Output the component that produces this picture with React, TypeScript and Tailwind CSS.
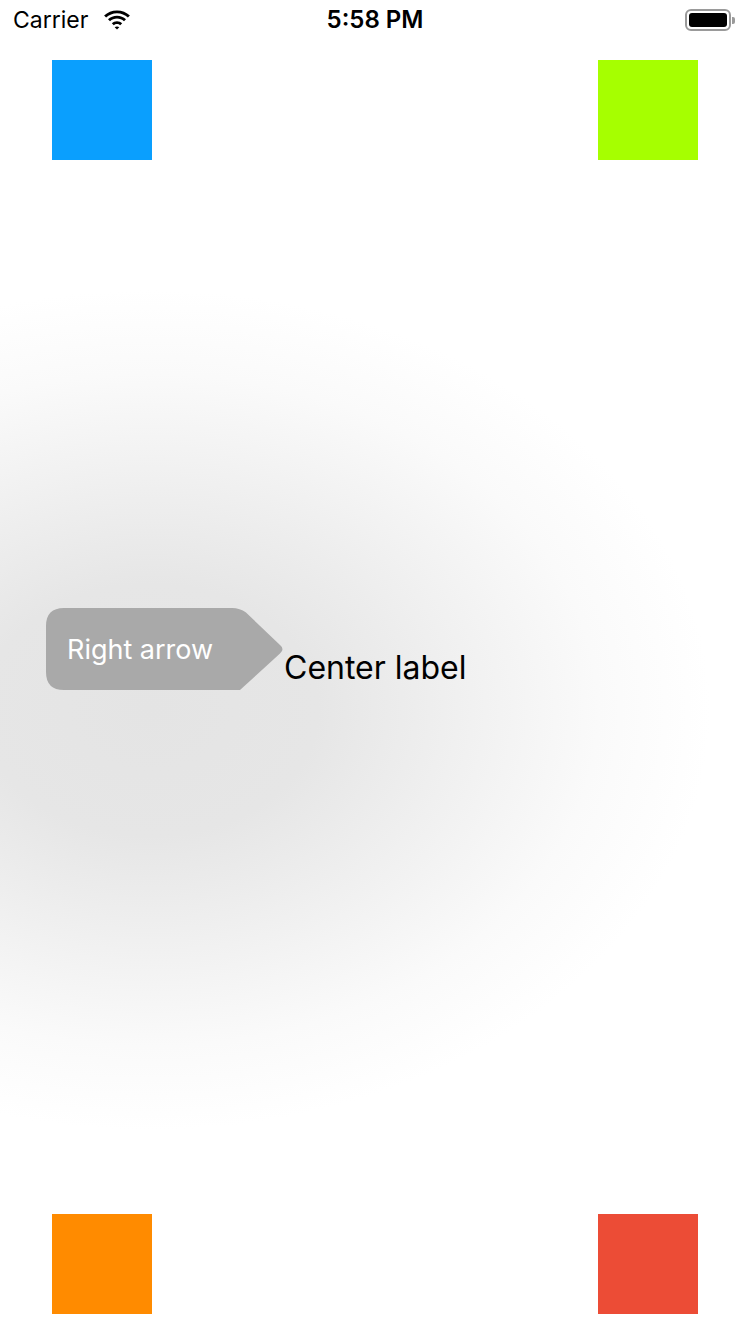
export default function App() {
    return (
        <div
            className="relative flex flex-col min-h-[1334px] w-[750px] bg-white overflow-hidden"
            style={{ fontFamily: "Inter, 'Noto Sans', sans-serif" }}
        >
            {/* soft shadow behind the tooltip */}
            <div className="absolute inset-0 bg-[radial-gradient(ellipse_560px_420px_at_150px_710px,#e4e4e4_0%,#e6e6e6_30%,#f2f2f2_60%,#fafafa_80%,#ffffff_100%)]"></div>

            <div className="relative flex flex-row items-center h-[40px] px-[13px] text-black">
                <div className="flex flex-row items-center gap-[15px] w-[200px]">
                    <span className="text-[23px] leading-none">Carrier</span>
                    <svg width="28" height="20" viewBox="0 0 28 20">
                        <path d="M14 3.2c4.2 0 8 1.6 10.9 4.3l2-2C23.5 2.3 19 .4 14 .4S4.5 2.3 1.1 5.5l2 2C6 4.8 9.8 3.2 14 3.2z" fill="black" />
                        <path d="M14 8.6c2.7 0 5.1 1 7 2.7l2-2C20.6 7.1 17.4 5.8 14 5.8s-6.6 1.3-9 3.5l2 2c1.9-1.7 4.3-2.7 7-2.7z" fill="black" />
                        <path d="M14 14c1.3 0 2.4.5 3.2 1.2l2-2C17.8 11.9 16 11.2 14 11.2s-3.8.7-5.2 2l2 2c.8-.7 1.9-1.2 3.2-1.2z" fill="black" />
                        <path d="M14 19.6l2.3-2.4c-.6-.5-1.4-.8-2.3-.8s-1.7.3-2.3.8z" fill="black" />
                    </svg>
                </div>
                <div className="flex-1 text-center text-[24px] font-semibold leading-none">5:58 PM</div>
                <div className="flex flex-row items-center justify-end w-[200px] pr-[2px]">
                    <div className="flex items-center justify-center w-[46px] h-[22px] rounded-[6px] border-2 border-[#9a9a9a] p-[2px]">
                        <div className="w-full h-full bg-black rounded-[3px]"></div>
                    </div>
                    <div className="w-[3px] h-[7px] bg-[#9a9a9a] rounded-r-[2px] ml-[1px]"></div>
                </div>
            </div>

            <div className="relative flex flex-row justify-between px-[52px] pt-[20px]">
                <div className="w-[100px] h-[100px] bg-[#0a9ffe]"></div>
                <div className="w-[100px] h-[100px] bg-[#a6ff00]"></div>
            </div>

            <div className="relative flex-1 flex flex-row items-start pl-[46px] pt-[448px]">
                <div className="relative w-[239px] h-[82px] flex items-center">
                    <svg className="absolute inset-0" width="239" height="82" viewBox="0 0 239 82">
                        <path
                            d="M18 0 H186 Q194 0 200 4.5 L234 37 Q239 41 234 45.5 L194 82 H18 Q0 82 0 64 V18 Q0 0 18 0 Z"
                            fill="#a9a9a9"
                        />
                    </svg>
                    <span className="relative pl-[21px] text-[27px] text-white leading-none">Right arrow</span>
                </div>
                <span className="mt-[44px] -ml-[1px] text-[32px] text-black leading-none">Center label</span>
            </div>

            <div className="relative flex flex-row justify-between px-[52px] pb-[20px]">
                <div className="w-[100px] h-[100px] bg-[#ff8b00]"></div>
                <div className="w-[100px] h-[100px] bg-[#ec4c36]"></div>
            </div>
        </div>
    );
}
